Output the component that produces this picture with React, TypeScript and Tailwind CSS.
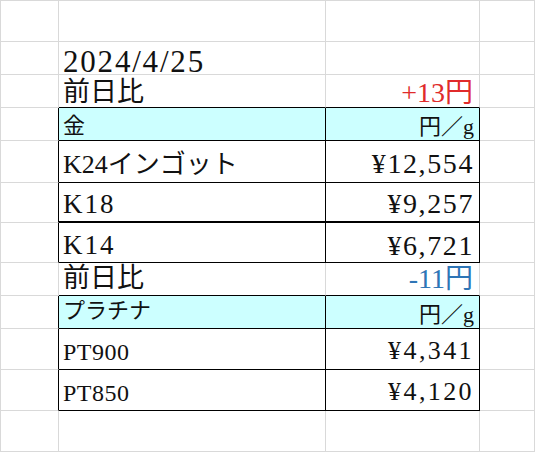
import React from 'react';

// spreadsheet-ish price sheet
const g = 'border-r border-b border-[#d9d9d9]';
const leftEdge = 'border-r border-b border-r-black border-b-[#d9d9d9]';
const topEdge = 'border-r border-b border-r-[#d9d9d9] border-b-black';
const box = 'border-r border-b border-black';

const Cell = ({ className = '', children }: { className?: string; children?: React.ReactNode }) => (
  <div className={`flex items-end whitespace-nowrap ${className}`}>{children}</div>
);

export default function App() {
  return (
    <div className="w-[536px] h-[453px] bg-white">
      <div className="grid grid-cols-[58px_267px_154px_55px] grid-rows-[41px_33px_33px_33px_42px_40px_40px_33px_33px_41px_41px_41px] border-t border-l border-[#d9d9d9] w-[535px] font-[family-name:'Liberation_Serif','Noto_Sans_CJK_JP',serif] text-[#111]">
        {/* row 1 */}
        <Cell className={g} />
        <Cell className={g} />
        <Cell className={g} />
        <Cell className={g} />

        {/* row 2: date */}
        <Cell className={g} />
        <Cell className={`${g} pl-[4px] text-[31px] leading-[24px] tracking-[1.8px]`}>2024/4/25</Cell>
        <Cell className={g} />
        <Cell className={g} />

        {/* row 3: gold diff */}
        <Cell className={g} />
        <Cell className={`${topEdge} pl-[4px] pb-[1px] text-[27px] leading-none`}>前日比</Cell>
        <Cell className={`${topEdge} justify-end pr-[6px] text-[28px] leading-none text-[#e02b2b]`}>+13円</Cell>
        <Cell className={g} />

        {/* row 4: gold header */}
        <Cell className={leftEdge} />
        <Cell className={`${box} bg-[#ccffff] pl-[4px] pb-[3px] text-[22px] leading-none`}>金</Cell>
        <Cell className={`${box} bg-[#ccffff] justify-end pr-[5px] pb-[2px] text-[22px] leading-none`}>円／g</Cell>
        <Cell className={g} />

        {/* row 5 */}
        <Cell className={leftEdge} />
        <Cell className={`${box} pl-[4px] pb-[4px] text-[26px] leading-none`}>K24インゴット</Cell>
        <Cell className={`${box} justify-end pr-[5px] pb-[4px] text-[28px] leading-none tracking-[1.6px]`}>¥12,554</Cell>
        <Cell className={g} />

        {/* row 6 */}
        <Cell className={leftEdge} />
        <Cell className={`${box} border-b-2 pl-[4px] pb-[3px] text-[27px] leading-none tracking-[2px]`}>K18</Cell>
        <Cell className={`${box} border-b-2 justify-end pr-[5px] pb-[3px] text-[28px] leading-none tracking-[1.6px]`}>¥9,257</Cell>
        <Cell className={g} />

        {/* row 7 */}
        <Cell className={leftEdge} />
        <Cell className={`${box} pl-[4px] pb-[3px] text-[27px] leading-none tracking-[2px]`}>K14</Cell>
        <Cell className={`${box} justify-end pr-[5px] pb-[2px] text-[28px] leading-none tracking-[1.6px]`}>¥6,721</Cell>
        <Cell className={g} />

        {/* row 8: platinum diff */}
        <Cell className={g} />
        <Cell className={`${topEdge} pl-[4px] pb-[3px] text-[27px] leading-none`}>前日比</Cell>
        <Cell className={`${topEdge} justify-end pr-[6px] pb-[2px] text-[28px] leading-none text-[#2e75b6]`}>-11円</Cell>
        <Cell className={g} />

        {/* row 9: platinum header */}
        <Cell className={leftEdge} />
        <Cell className={`${box} bg-[#ccffff] pl-[4px] pb-[6px] text-[22px] leading-none`}>プラチナ</Cell>
        <Cell className={`${box} bg-[#ccffff] justify-end pr-[5px] pb-[2px] text-[22px] leading-none`}>円／g</Cell>
        <Cell className={g} />

        {/* row 10 */}
        <Cell className={leftEdge} />
        <Cell className={`${box} pl-[4px] pb-[5px] text-[24px] leading-none tracking-[0.5px]`}>PT900</Cell>
        <Cell className={`${box} justify-end pr-[5px] pb-[5px] text-[26px] leading-none tracking-[2.4px]`}>¥4,341</Cell>
        <Cell className={g} />

        {/* row 11 */}
        <Cell className={leftEdge} />
        <Cell className={`${box} pl-[4px] pb-[5px] text-[24px] leading-none tracking-[0.5px]`}>PT850</Cell>
        <Cell className={`${box} justify-end pr-[5px] pb-[5px] text-[26px] leading-none tracking-[2.4px]`}>¥4,120</Cell>
        <Cell className={g} />

        {/* row 12 */}
        <Cell className={g} />
        <Cell className={g} />
        <Cell className={g} />
        <Cell className={g} />
      </div>
    </div>
  );
}
